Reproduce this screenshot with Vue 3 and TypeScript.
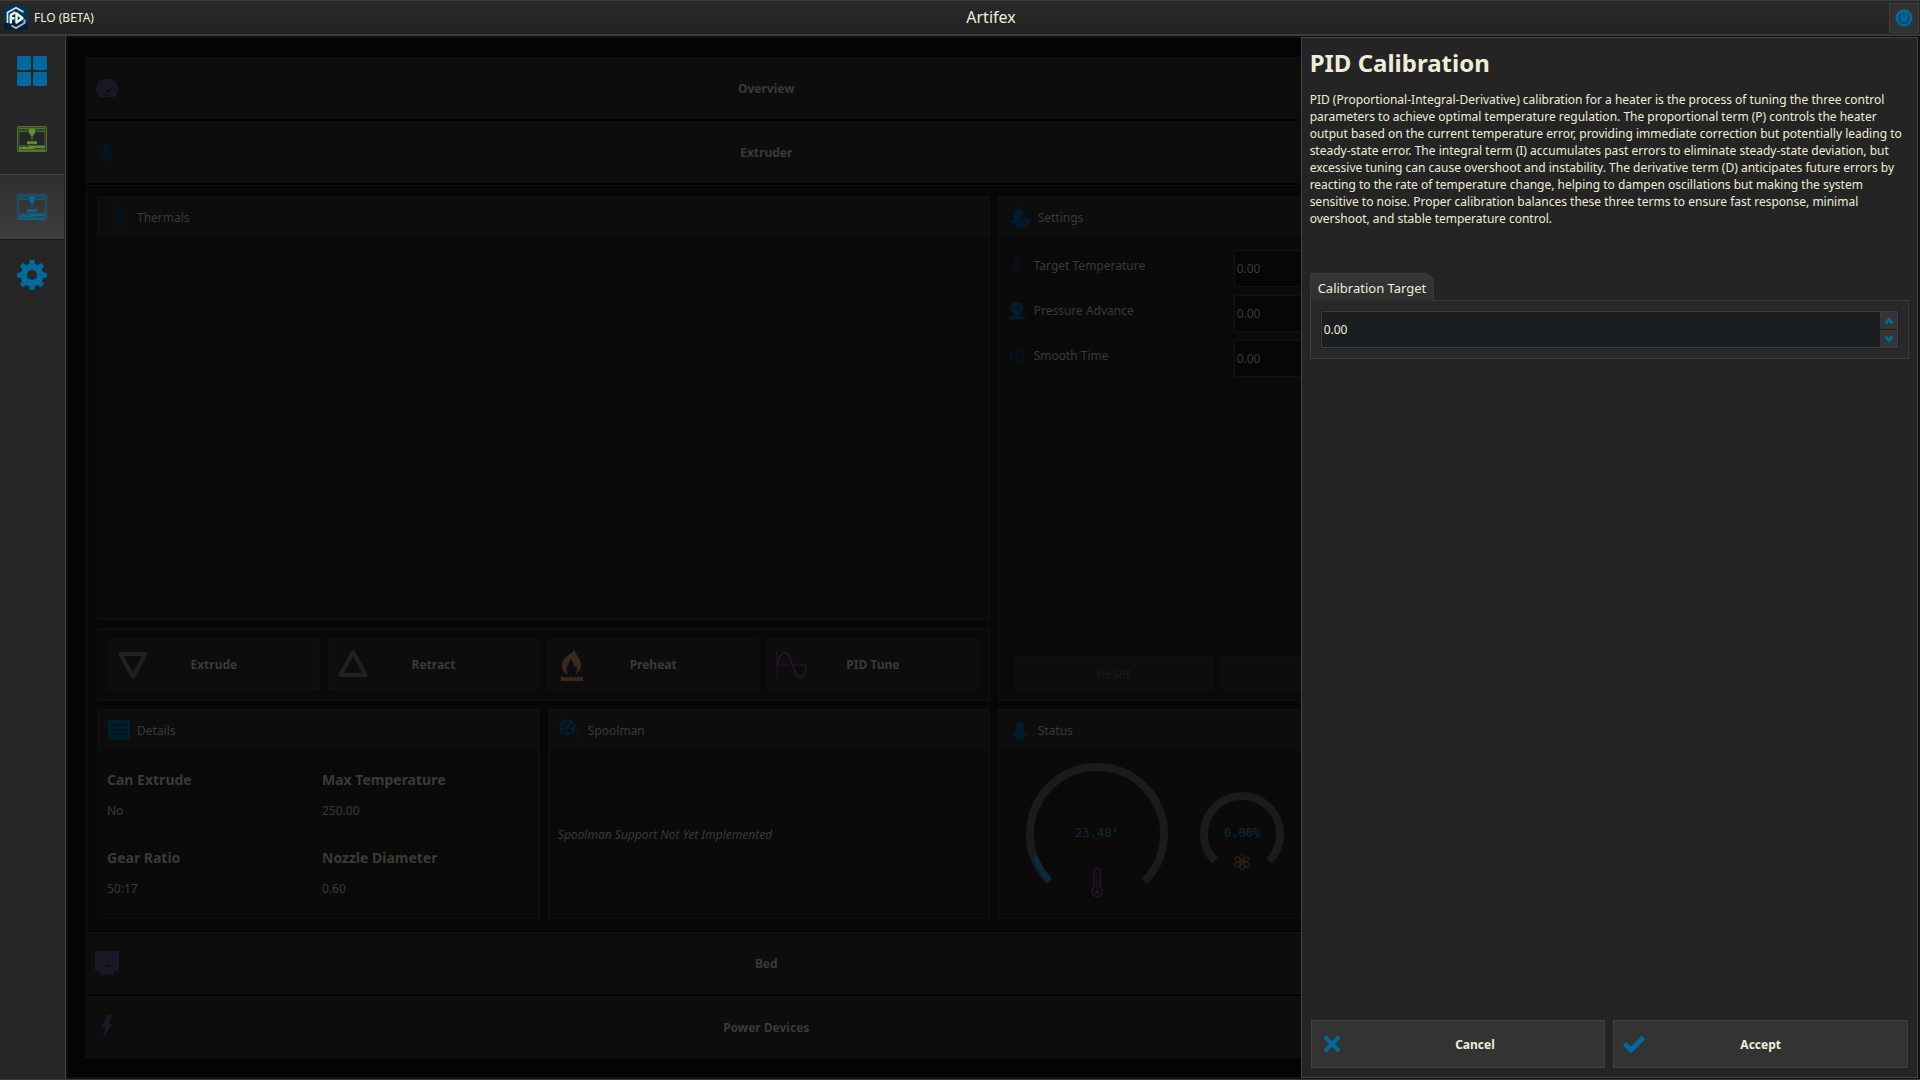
<script setup lang="ts">
import { reactive, ref } from 'vue'

interface NavItem { id: string; label: string; icon: string; tone: string }
interface Action { label: string; icon: string; tone: string }
interface Setting { id: string; label: string; icon: string; tone: string }
interface Detail { term: string; value: string }

const nav: NavItem[] = [
  { id: 'dashboard', label: 'Dashboard', icon: 'i-grid', tone: 'blue' },
  { id: 'printers', label: 'Printers', icon: 'i-printer', tone: 'green' },
  { id: 'printer', label: 'Artifex', icon: 'i-printer', tone: 'teal' },
  { id: 'settings', label: 'Settings', icon: 'i-gear', tone: 'blue' },
]
const active = ref('printer')

const actions: Action[] = [
  { label: 'Extrude', icon: 'i-down', tone: 'd-grey' },
  { label: 'Retract', icon: 'i-up', tone: 'd-grey' },
  { label: 'Preheat', icon: 'i-flame', tone: 'd-brown' },
  { label: 'PID Tune', icon: 'i-wave', tone: 'd-purple' },
]

const settings: Setting[] = [
  { id: 'target', label: 'Target Temperature', icon: 'i-thermo', tone: 'd-deep' },
  { id: 'advance', label: 'Pressure Advance', icon: 'i-pressure', tone: 'd-blue' },
  { id: 'smooth', label: 'Smooth Time', icon: 'i-clock', tone: 'd-deep' },
]
const values = reactive<Record<string, string>>({ target: '0.00', advance: '0.00', smooth: '0.00' })

const details: Detail[] = [
  { term: 'Can Extrude', value: 'No' },
  { term: 'Max Temperature', value: '250.00' },
  { term: 'Gear Ratio', value: '50:17' },
  { term: 'Nozzle Diameter', value: '0.60' },
]

const calibration = ref('0.00')
function step(delta: number): void {
  calibration.value = Math.max(0, Number(calibration.value) + delta).toFixed(2)
}

/* Arc from startDeg to endDeg, clockwise, with 0 degrees pointing right. */
function arc(c: number, r: number, startDeg: number, endDeg: number): string {
  const at = (d: number) => {
    const a = (d * Math.PI) / 180
    return `${(c + r * Math.cos(a)).toFixed(2)} ${(c + r * Math.sin(a)).toFixed(2)}`
  }
  return `M${at(startDeg)}A${r} ${r} 0 ${endDeg - startDeg > 180 ? 1 : 0} 1 ${at(endDeg)}`
}
</script>

<template>
  <div class="shell">
    <svg class="defs" aria-hidden="true">
      <symbol id="i-grid" viewBox="0 0 30 30">
        <rect width="14" height="14" rx="1.5" /><rect x="16" width="14" height="14" rx="1.5" />
        <rect y="16" width="14" height="14" rx="1.5" /><rect x="16" y="16" width="14" height="14" rx="1.5" />
      </symbol>
      <symbol id="i-printer" viewBox="0 0 30 26">
        <rect x=".6" y=".6" width="28.8" height="24.8" rx="1.2" fill="none" stroke="currentColor" stroke-width="1.2" opacity=".75" />
        <path d="M2 1.7h26v1.6H2zM2 4.5h26v1.3H2z" opacity=".8" />
        <path d="M2.2 5v14M27.8 5v14" stroke="currentColor" stroke-width=".8" opacity=".5" />
        <path d="M12 3h6v5h-1.5v2h-1v3.5h-1V10h-1V8H12z" />
        <path d="M10 15.2h10v3H10z" />
        <path fill-rule="evenodd" d="M2 19.5h26V25H2zM3 20.3h3v.8H3zm4.500 0h4v.8h-4zm11 1.700-2 1.500H3v.7h14l2-1.500h9V22zm1 1.500h2v1h-2zm3 0h2v1h-2zm3 0h1.500v1h-1.500z" />
      </symbol>
      <symbol id="i-gear" viewBox="0 0 30 30">
        <path fill-rule="evenodd" d="M12.800 0h4.400l.8 4 2.900 1.200L24.300 3 27.200 6l-2.300 3.300L26 12.100l4 .8v4.300l-4 .8-1.200 2.800 2.300 3.300-3.100 3.100-3.200-2.300L18 26.100 17.200 30h-4.400L12 26.100l-2.800-1.200L6 27.200 2.900 24.100l2.200-3.300L4 18l-4-.8v-4.300l4-.8 1.200-2.800L2.900 6 6 2.900l3.200 2.300L12 4zM15 10a5 5 0 100 10 5 5 0 000-10z" />
      </symbol>
      <symbol id="i-gauge" viewBox="0 0 22 18">
        <path fill-rule="evenodd" d="M3 18a11 11 0 1116 0zM2.500 10.500h2.500v1H2.500zm14.500 0h2.500v1H17zM10.500 2.500h1V5h-1zM4.600 5.200l.8-.7L7 6.200l-.7.7zM10 12.500 17.500 7l-5.500 6.800a1.400 1.400 0 01-2-1.300zM7.500 15.500h7v1h-7z" />
      </symbol>
      <symbol id="i-hotend" viewBox="0 0 22 24">
        <path d="M10 5c0-3 3-1.500 4-4.500" fill="none" stroke="currentColor" stroke-width="1.200" />
        <path d="M7 5h8.500v1.500h-.7v2h.7v1h-.7v2h.7v1h-.7v2.500h3l.7 2-2.200.5H6l-2.500-.5.7-2h2.500z" />
        <path d="M6.500 18.500h9l-2.500 4h-4z" fill="none" stroke="currentColor" stroke-width="1.200" />
        <path d="M9.500 19h3v2.500h-3z" />
      </symbol>
      <symbol id="i-hotend-gear" viewBox="0 0 22 24">
        <path d="M8 5c0-3 3-1.500 4-4.500" fill="none" stroke="currentColor" stroke-width="1.200" />
        <path d="M5 5h8.500v6.500L11 13l-1 5H3l-1-.8 1-2h2zM5 18.500h5l1.500 4H8z" />
        <circle cx="15.500" cy="17.500" r="3" fill="none" stroke="currentColor" stroke-width="2.500" />
        <circle cx="15.500" cy="17.500" r="4.900" fill="none" stroke="currentColor" stroke-width="1.500" stroke-dasharray="2 1.850" />
      </symbol>
      <symbol id="i-thermo" viewBox="0 0 22 24">
        <path d="M8.500 15.500V3a2.500 2.500 0 015 0v12.500a4 4 0 11-5 0z" fill="none" stroke="currentColor" stroke-width="1.500" />
        <path d="M10.500 5h1v2h-1zM10.500 9h1v8h-1z" /><circle cx="11" cy="19" r="1.700" />
      </symbol>
      <symbol id="i-pressure" viewBox="0 0 16 18">
        <path fill-rule="evenodd" d="M8 0a6.500 6.500 0 013 12.300V14H5v-1.700A6.500 6.500 0 018 0zM11.500 3.500 7 6.500 8.500 8z" />
        <path d="M0 14.500h16v3H0z" />
      </symbol>
      <symbol id="i-clock" viewBox="0 0 16 16">
        <circle cx="8" cy="8" r="6.600" fill="none" stroke="currentColor" stroke-width="1.300" />
        <path d="M8 3.500V8h3.500" fill="none" stroke="currentColor" stroke-width="1.600" />
      </symbol>
      <symbol id="i-list" viewBox="0 0 22 20">
        <path fill-rule="evenodd" d="M0 0h22v19.500H0zM3.500 4.500v1.200h4V4.500zm5 0v1.200h4V4.500zm5 0v1.200h5V4.500zm-10 4.500v1.200h4V9zm5 0v1.200h4V9zm5 0v1.200h5V9zm-10 4.500v1.200h4v-1.200zm5 0v1.200h4v-1.200zm5 0v1.200h5v-1.200z" />
      </symbol>
      <symbol id="i-spool" viewBox="0 0 24 24">
        <path fill-rule="evenodd" d="M9 0a9 9 0 100 18A9 9 0 009 0zM9 2.200a2 2 0 110 4.200 2 2 0 010-4.200zM4.400 5.600a2 2 0 110 4.200 2 2 0 010-4.200zm9.200 0a2 2 0 110 4.200 2 2 0 010-4.200zM6.200 11a2 2 0 110 4.200 2 2 0 010-4.200zm5.600 0a2 2 0 110 4.200 2 2 0 010-4.200z" />
        <path d="M17.500 7c4 4 1 9 3 14q.5 2 3 2" fill="none" stroke="currentColor" stroke-width="1.100" />
      </symbol>
      <symbol id="i-bed" viewBox="0 0 24 24">
        <path fill-rule="evenodd" d="M0 0h24v20h-4l-2.500 3.500h-11L4 20H0zM8 15q4-3 7 0v1.500q-2-1.500-3-1.500t-4 0z" />
      </symbol>
      <symbol id="i-bolt" viewBox="0 0 12 24">
        <path d="M5.500 0h5.500L8.200 9H11L1.500 24 4.500 12.500H.5z" />
      </symbol>
      <symbol id="i-down" viewBox="0 0 32 32">
        <path d="M3.500 5h25L16 28z" fill="none" stroke="currentColor" stroke-width="4" stroke-linejoin="round" />
      </symbol>
      <symbol id="i-up" viewBox="0 0 32 32">
        <path d="M3.500 26h25L16 3z" fill="none" stroke="currentColor" stroke-width="4" stroke-linejoin="round" />
      </symbol>
      <symbol id="i-flame" viewBox="0 0 32 32">
        <path fill-rule="evenodd" d="M18.500 0c1 7 6.500 8.500 6.500 16 0 4-2 7-5.500 9.500H19c2-2.500 2.500-5 1-9.500-.5 1.500-1 2.200-2 2.500 0-4-1-6.500-4-9 .5 4.500-3.500 6-3.500 11 0 2 .8 3.500 2 5h-.7C8 24 6 20.500 6 16.500 6 7 15.500 6.500 18.500 0zM5 27.500h2.500v1h2v-1h2v1h2v-1h2v1h2v-1h2v1h2v-1h2v1h1v-1H27V32H5z" />
      </symbol>
      <symbol id="i-wave" viewBox="0 0 32 32">
        <path d="M1 2.500v27M1 16h12M18 16h13" fill="none" stroke="currentColor" stroke-width="1.400" />
        <path d="M1.500 16C3 8 5.500 3.500 9 3.500c7 0 8 25 15 25 3 0 5-3.500 6.500-12" fill="none" stroke="currentColor" stroke-width="1.900" />
      </symbol>
      <symbol id="i-cross" viewBox="0 0 20 20">
        <path d="M3 3l14 14M17 3 3 17" stroke="currentColor" stroke-width="4" />
      </symbol>
      <symbol id="i-check" viewBox="0 0 24 20">
        <path d="M2.500 9.500 9 16 21.500 3.500" fill="none" stroke="currentColor" stroke-width="5" />
      </symbol>
    </svg>

    <header class="titlebar">
      <div class="brand">
        <svg width="24" height="24" viewBox="0 0 24 24" aria-hidden="true">
          <rect width="24" height="24" rx="3" fill="#053552" />
          <rect y="16" width="24" height="8" rx="3" fill="#041f38" />
          <path d="M3.500 17V6.500L12 1.800l7.500 4.200" fill="none" stroke="#cfeaf6" stroke-width="1.700" />
          <path d="M20.500 13.500v3.500L12 22l-4.500-2.500" fill="none" stroke="#9db8d4" stroke-width="2" />
          <path d="M6.800 17.500V9l4.700-2.800M7 12.300h3.500" fill="none" stroke="#f2fbff" stroke-width="2.400" />
          <path d="M12.500 7.500v9l6-4.300z" fill="none" stroke="#f2fbff" stroke-width="2.400" stroke-linejoin="round" />
        </svg>
        <span>FLO (BETA)</span>
      </div>
      <h1 class="printer-name">Artifex</h1>
      <div class="corner">
        <button class="power" type="button" aria-label="Power">
          <svg width="18" height="18" viewBox="0 0 18 18" aria-hidden="true">
            <circle cx="9" cy="9" r="8.500" fill="#00699e" />
            <path d="M6.300 5a5 5 0 105.400 0M9 3.500v4.500" fill="none" stroke="#1f3d4e" stroke-width="1.400" />
          </svg>
        </button>
      </div>
    </header>

    <div class="workspace">
      <nav class="sidebar">
        <button
          v-for="n in nav" :key="n.id" type="button" class="nav-item" :class="[n.tone, { active: active === n.id }]"
          :aria-label="n.label" @click="active = n.id"
        >
          <svg width="30" height="30" aria-hidden="true"><use :href="'#' + n.icon" /></svg>
        </button>
      </nav>

      <div class="stage">
        <main class="main">
          <div class="content">
            <button class="section" type="button">
              <svg class="d-violet" width="22" height="18" aria-hidden="true"><use href="#i-gauge" /></svg><span>Overview</span>
            </button>
            <button class="section" type="button">
              <svg class="d-deep" width="22" height="24" aria-hidden="true"><use href="#i-hotend" /></svg><span>Extruder</span>
            </button>

            <div class="panel">
              <section class="card thermals">
                <h2 class="card-head"><svg class="d-deep" width="22" height="24" aria-hidden="true"><use href="#i-thermo" /></svg>Thermals</h2>
              </section>

              <section class="card settings">
                <h2 class="card-head"><svg class="d-blue" width="22" height="24" aria-hidden="true"><use href="#i-hotend-gear" /></svg>Settings</h2>
                <div class="fields">
                  <div v-for="s in settings" :key="s.id" class="field">
                    <label :for="s.id"><svg :class="s.tone" width="16" height="18" aria-hidden="true"><use :href="'#' + s.icon" /></svg>{{ s.label }}</label>
                    <input :id="s.id" v-model="values[s.id]" type="text">
                  </div>
                </div>
                <div class="form-actions">
                  <button type="button" disabled>Reset</button>
                  <button type="button" disabled></button>
                </div>
              </section>

              <section class="card actions">
                <button v-for="a in actions" :key="a.label" class="action" type="button">
                  <svg :class="a.tone" width="32" height="32" aria-hidden="true"><use :href="'#' + a.icon" /></svg><span>{{ a.label }}</span>
                </button>
              </section>

              <section class="card details">
                <h2 class="card-head"><svg class="d-blue" width="22" height="20" aria-hidden="true"><use href="#i-list" /></svg>Details</h2>
                <dl>
                  <div v-for="d in details" :key="d.term"><dt>{{ d.term }}</dt><dd>{{ d.value }}</dd></div>
                </dl>
              </section>

              <section class="card spool">
                <h2 class="card-head"><svg class="d-blue" width="22" height="24" aria-hidden="true"><use href="#i-spool" /></svg>Spoolman</h2>
                <p>Spoolman Support Not Yet Implemented</p>
              </section>

              <section class="card status">
                <h2 class="card-head"><svg class="d-blue" width="22" height="24" aria-hidden="true"><use href="#i-hotend" /></svg>Status</h2>
                <div class="gauges">
                  <svg width="142" height="142" viewBox="0 0 142 142">
                    <path class="track" :d="arc(71, 67, 135, 405)" />
                    <path class="value" :d="arc(71, 66, 136, 160)" />
                    <text x="71" y="74">23.48°</text>
                    <svg class="d-purple" x="57" y="103" width="28" height="34"><use href="#i-thermo" /></svg>
                  </svg>
                  <svg width="84" height="84" viewBox="0 0 84 84">
                    <path class="track" :d="arc(42, 38, 135, 405)" />
                    <text x="42" y="45">0.00%</text>
                    <g class="fan">
                      <circle cx="42" cy="70" r="1.500" />
                      <path v-for="k in 6" :key="k" d="M42 68q-4-2-1.500-5.500 4-1.500 3.500 2T42 68" :transform="`rotate(${k * 60} 42 70)`" />
                    </g>
                  </svg>
                </div>
              </section>
            </div>

            <button class="section" type="button">
              <svg class="d-violet" width="24" height="24" aria-hidden="true"><use href="#i-bed" /></svg><span>Bed</span>
            </button>
            <button class="section" type="button">
              <svg class="d-violet" width="12" height="24" aria-hidden="true"><use href="#i-bolt" /></svg><span>Power Devices</span>
            </button>
          </div>
        </main>

        <aside class="drawer" aria-labelledby="drawer-title">
          <h2 id="drawer-title">PID Calibration</h2>
          <p>PID (Proportional-Integral-Derivative) calibration for a heater is the process of tuning the three control parameters to achieve optimal temperature regulation. The proportional term (P) controls the heater output based on the current temperature error, providing immediate correction but potentially leading to steady-state error. The integral term (I) accumulates past errors to eliminate steady-state deviation, but excessive tuning can cause overshoot and instability. The derivative term (D) anticipates future errors by reacting to the rate of temperature change, helping to dampen oscillations but making the system sensitive to noise. Proper calibration balances these three terms to ensure fast response, minimal overshoot, and stable temperature control.</p>
          <label class="tab" for="calibration">Calibration Target</label>
          <div class="tab-body">
            <div class="spinbox">
              <input id="calibration" v-model="calibration" type="text">
              <div class="steps">
                <button type="button" aria-label="Increase" @click="step(1)">
                  <svg width="10" height="8" viewBox="0 0 10 8" aria-hidden="true"><path d="M1.500 6.500 5 2.500l3.500 4" /></svg>
                </button>
                <button type="button" aria-label="Decrease" @click="step(-1)">
                  <svg width="10" height="8" viewBox="0 0 10 8" aria-hidden="true"><path d="M1.500 1.500 5 5.500l3.500-4" /></svg>
                </button>
              </div>
            </div>
          </div>
          <div class="drawer-actions">
            <button class="cancel" type="button"><svg width="22" height="20" aria-hidden="true"><use href="#i-cross" /></svg><span>Cancel</span></button>
            <button class="accept" type="button"><svg width="24" height="20" aria-hidden="true"><use href="#i-check" /></svg><span>Accept</span></button>
          </div>
        </aside>
      </div>
    </div>
  </div>
</template>

<style>
body { background: #232323; }
</style>

<style scoped>
.shell {
  display: flex;
  flex-direction: column;
  min-height: 100vh;
  box-sizing: border-box;
  border-bottom: 1px solid #3b3b3b;
  background: #242424;
  color: #efedd9;
  font: 12px/17px "Noto Sans", sans-serif;
}
.shell *, .shell *::before { box-sizing: border-box; }
.defs { display: none; }
svg { fill: currentColor; flex: none; }
button, input { font: inherit; color: inherit; margin: 0; }
button { cursor: pointer; padding: 0; border: 1px solid; border-radius: 0; }
h1, h2, p, dl, dd { margin: 0; }

.titlebar {
  display: grid;
  grid-template-columns: 1fr auto 1fr;
  align-items: center;
  height: 36px;
  padding-left: 4px;
  border-top: 1px solid #3b3b3b;
  border-bottom: 2px solid #3b3b3b;
  background: linear-gradient(#2a2a2a, #222);
}
.brand { display: flex; align-items: center; gap: 6px; }
.printer-name { font-size: 16px; line-height: 22px; font-weight: 400; padding: 0 0 2px 58px; }
.corner { display: flex; justify-content: flex-end; padding-right: 1px; }
.power {
  display: grid;
  place-items: center;
  width: 30px;
  height: 30px;
  border-color: #3d3d3d;
  background: #313131;
}

.workspace { flex: 1; display: flex; }
.sidebar {
  width: 66px;
  padding-top: 2px;
  border-right: 1px solid #3f3f3f;
  background: #262626;
}
.nav-item {
  display: grid;
  place-items: center;
  width: 64px;
  height: 66px;
  margin-bottom: 2px;
  border-color: transparent;
  background: none;
}
.nav-item.active {
  border-color: #454545 transparent #191919;
  border-left: 0;
  border-right: 0;
  background: linear-gradient(#2f2f2f, #3e3e3e);
}
.blue { color: #00699e; }
.green { color: #5f8c2c; }
.teal { color: #0c658f; }

.stage { position: relative; flex: 1; min-width: 0; display: flex; padding: 1px; background: #101010; }
.main {
  flex: 1;
  display: grid;
  grid-template-columns: 3fr 1fr;
  padding: 19px 18px;
  border: 1px solid #0f0f0f;
  background: #040406;
  color: #3a3a36;
}
.content { display: flex; flex-direction: column; gap: 2px; min-width: 0; }
.section {
  display: grid;
  grid-template-columns: 40px 1fr 40px;
  align-items: center;
  justify-items: center;
  height: 62px;
  border-color: #101010;
  background: #0d0d0d;
  font-weight: 700;
}
.d-violet { color: #191925; }
.d-blue { color: #001d2d; }
.d-deep { color: #001722; }
.d-grey { color: #202122; }
.d-brown { color: #392a1e; }
.d-purple { color: #251227; }

.panel {
  flex: 1;
  display: grid;
  grid-template-columns: 443fr 442fr 438fr;
  grid-template-rows: 1fr 73px 210px;
  grid-template-areas: "thermals thermals settings" "actions actions settings" "details spool status";
  gap: 8px;
  padding: 10px;
  border: 1px solid #101010;
  background: #070707;
}
.card { display: flex; flex-direction: column; min-width: 0; border: 1px solid #101010; background: #0a0a0a; }
.card-head {
  display: flex;
  flex: none;
  align-items: center;
  gap: 7px;
  height: 40px;
  padding: 0 10px;
  background: #0d0d0d;
  font-size: 12px;
  font-weight: 400;
}
.thermals { grid-area: thermals; }
.settings { grid-area: settings; }
.details { grid-area: details; }
.spool { grid-area: spool; }
.status { grid-area: status; }
.actions { grid-area: actions; flex-direction: row; gap: 8px; padding: 10px; }
.action {
  flex: 1;
  display: grid;
  grid-template-columns: 48px 1fr 48px;
  align-items: center;
  justify-items: center;
  border-color: #101010;
  background: #0d0d0d;
  font-weight: 700;
}

.fields { flex: 1; display: flex; flex-direction: column; gap: 8px; padding: 13px 10px; }
.field { display: grid; grid-template-columns: 225px 1fr; height: 37px; }
.field label { display: flex; align-items: center; gap: 9px; padding-bottom: 6px; }
.field input { min-width: 0; border: 1px solid #121212; padding: 0 2px; background: #060606; outline: 0; }
.form-actions { display: flex; gap: 8px; padding: 0 16px 10px; }
.form-actions button { flex: 1; height: 34px; border-color: #101010; background: #0d0d0d; color: #19191b; font-size: 13px; }

dl { display: grid; grid-template-columns: 215px 1fr; row-gap: 27px; padding: 20px 9px 0; }
dt { font-size: 14px; font-weight: 700; line-height: 20px; margin-bottom: 11px; }
dd { line-height: 20px; }
.spool p { flex: 1; display: flex; align-items: center; padding: 0 9px; font-style: italic; }

.gauges { flex: 1; display: flex; align-items: center; gap: 32px; padding-left: 27px; }
.gauges text { font: 12px "DejaVu Sans Mono", monospace; text-anchor: middle; fill: #0b2c3a; }
.track, .value, .fan { fill: none; }
.track { stroke: #1b1b1b; stroke-width: 8; }
.value { stroke: #0b2c3a; stroke-width: 5; }
.fan { stroke: #33261b; stroke-width: 1; }

.drawer {
  position: absolute;
  top: 1px;
  right: 2px;
  bottom: 1px;
  width: 33.3%;
  display: flex;
  flex-direction: column;
  padding: 8px 8px 9px;
  border: 1px solid #444;
  background: #242424;
}
.drawer h2 { font-size: 24px; line-height: 33px; font-weight: 700; }
.drawer p { margin: 12px 0 46px; }
.tab {
  position: relative;
  align-self: flex-start;
  height: 28px;
  margin-bottom: -1px;
  padding: 0 7px;
  border: 1px solid #3b3b3b;
  border-bottom: 0;
  border-top-right-radius: 10px;
  background: linear-gradient(#363636, #2e2e2e);
  font-size: 13px;
  line-height: 28px;
}
.tab-body { padding: 10px; border: 1px solid #3b3b3b; background: #282828; }
.spinbox { display: flex; height: 37px; border: 1px solid #3f3f3f; outline: 1px solid #202020; background: #1b1e20; }
.spinbox input { flex: 1; min-width: 0; padding: 0 2px; border: 0; background: none; outline: 0; }
.steps { display: flex; flex-direction: column; gap: 1px; width: 17px; background: #1a1a1a; }
.steps button { flex: 1; display: grid; place-items: center; border: 0; background: #353535; }
.steps path { fill: none; stroke: #00699e; stroke-width: 3; }
.drawer-actions { display: flex; gap: 8px; margin-top: auto; padding: 0 1px; }
.drawer-actions button {
  flex: 1;
  display: grid;
  align-items: center;
  justify-items: center;
  height: 48px;
  border-color: #3f3f3f;
  background: #333;
  font-weight: 700;
}
.drawer-actions .cancel { grid-template-columns: 40px 1fr 6px; }
.drawer-actions .accept { grid-template-columns: 40px 1fr 40px; }
.drawer-actions svg { color: #00699e; }
</style>
